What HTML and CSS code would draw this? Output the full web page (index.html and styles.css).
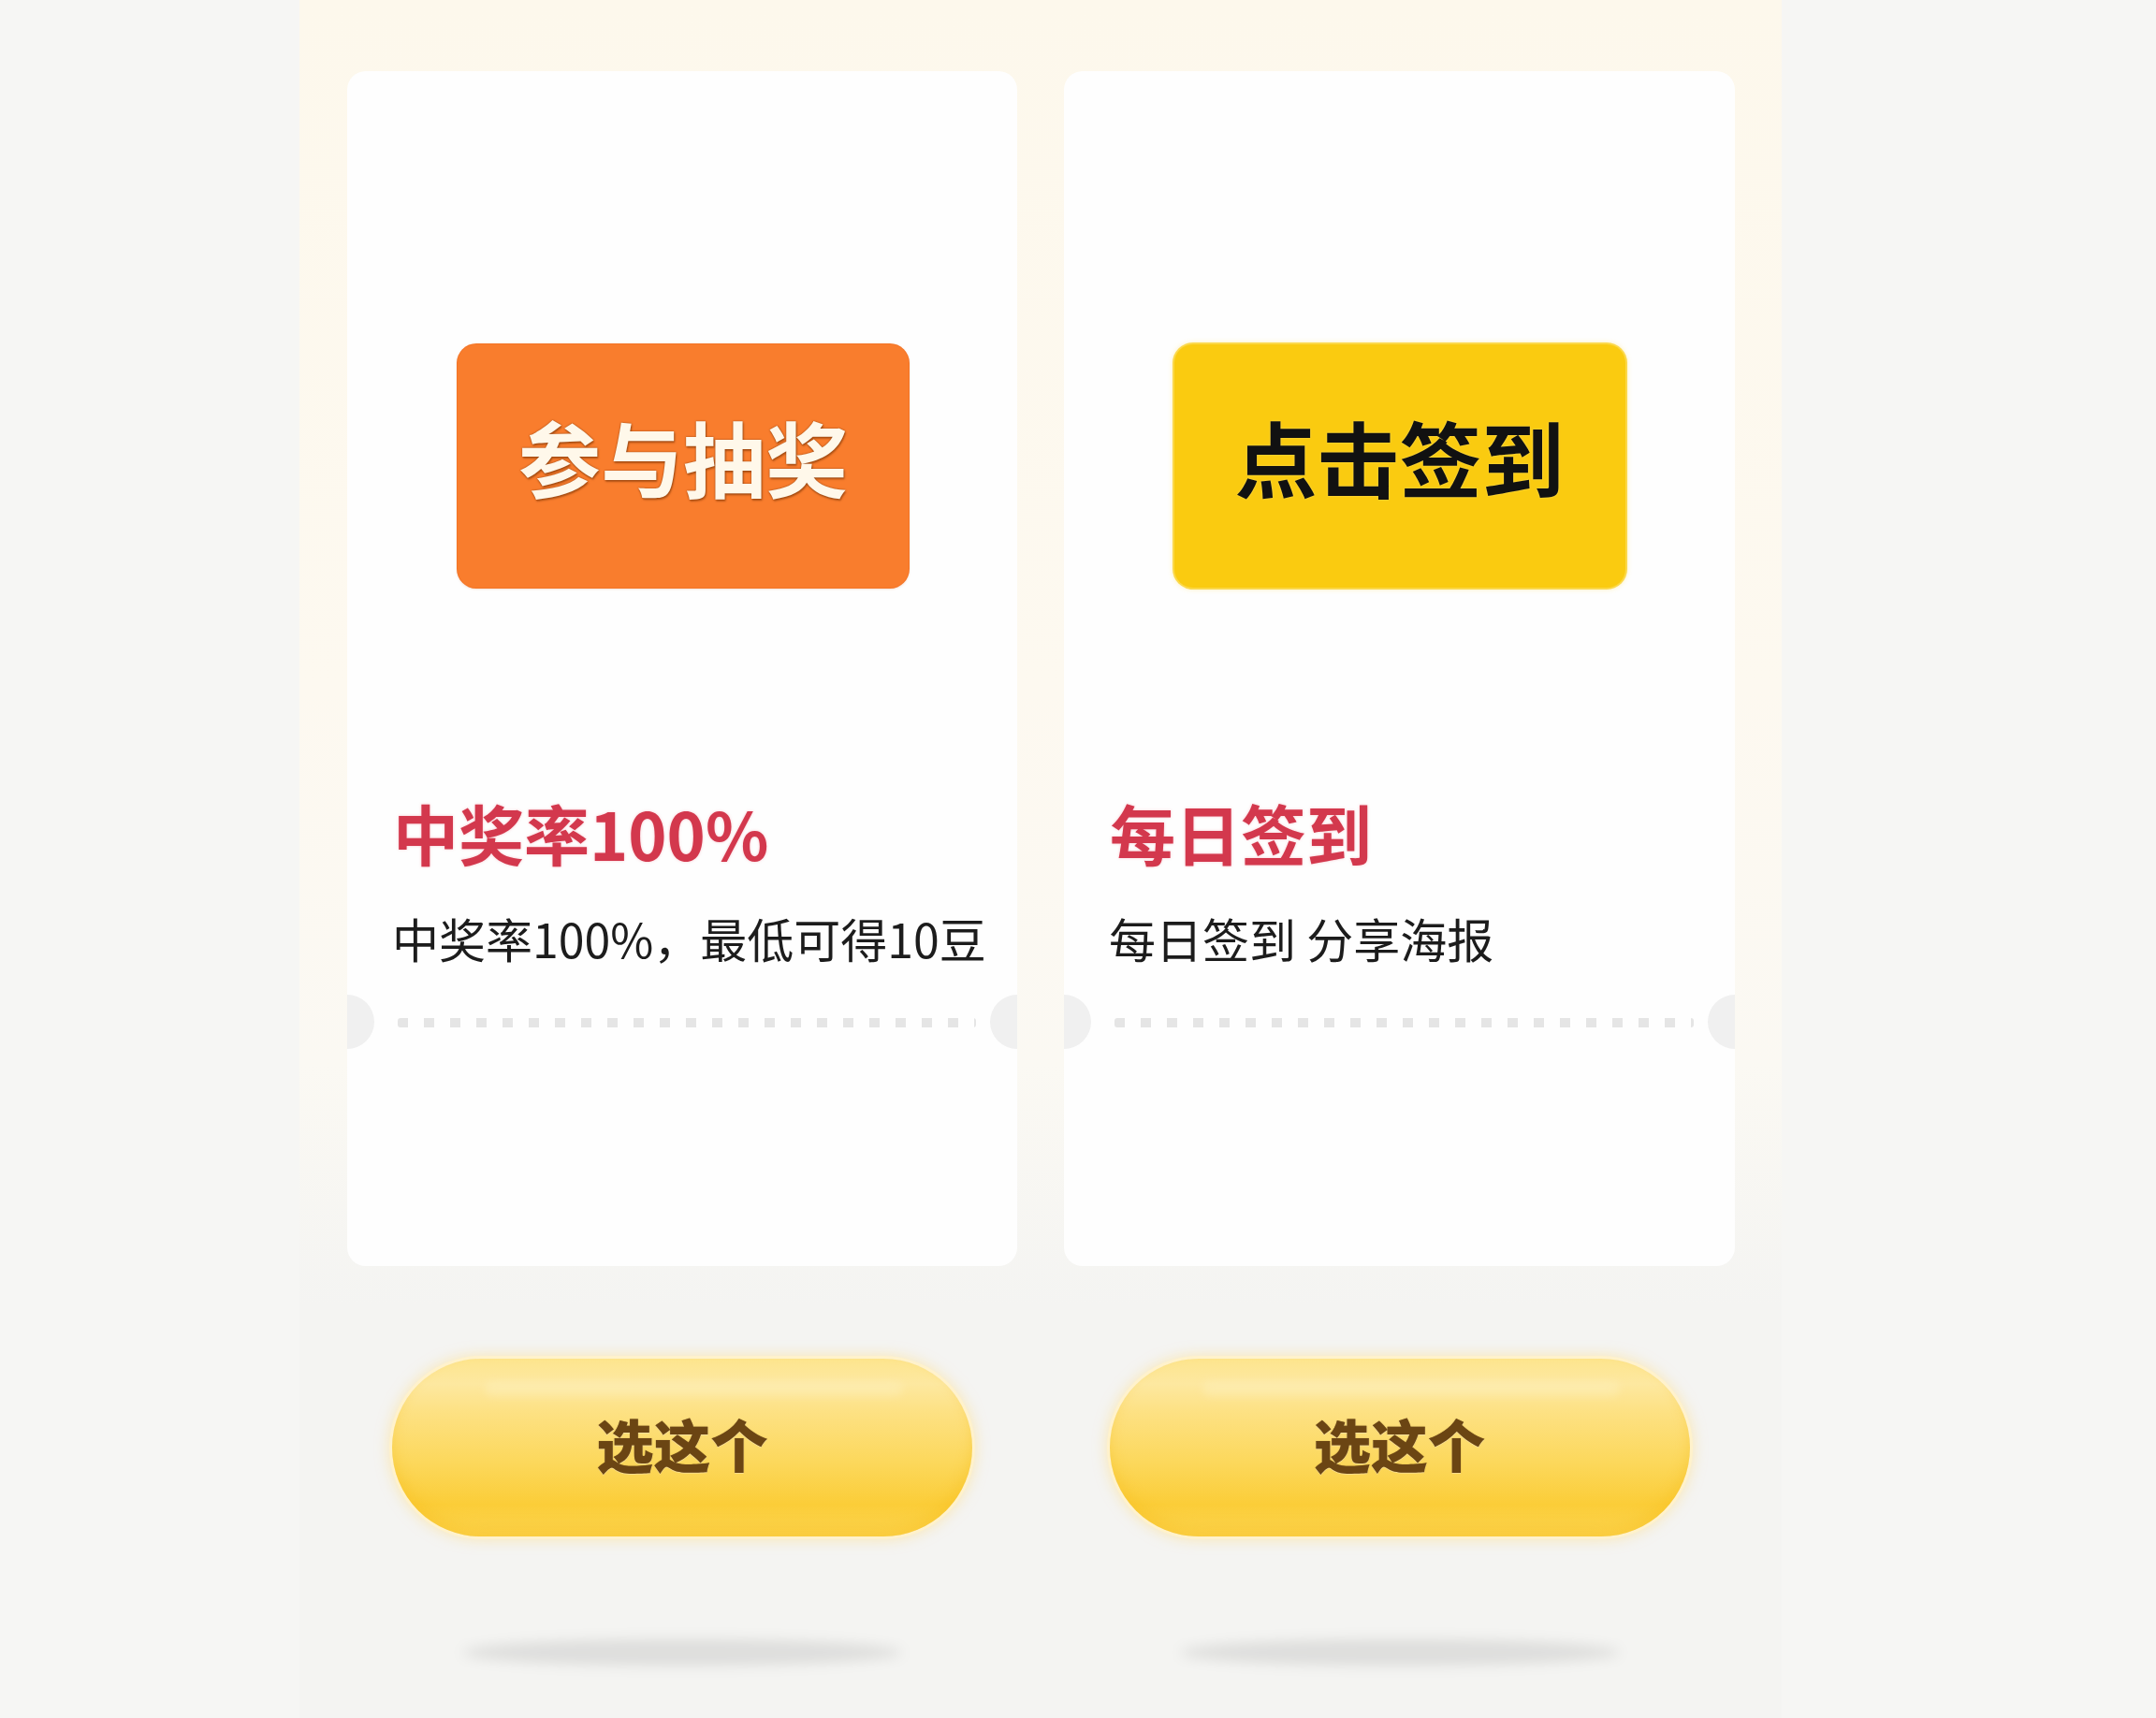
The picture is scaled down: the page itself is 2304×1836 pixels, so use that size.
FILE: index.html
```html
<!DOCTYPE html>
<html lang="zh-CN">
<head>
<meta charset="utf-8">
<title>选择任务</title>
<link rel="stylesheet" href="styles.css">
</head>
<body>
<div class="page">
  <div class="panel">
    <div class="column">
      <div class="card">
        <div class="badge badge-orange"><span>参与抽奖</span></div>
        <div class="title">中奖率100%</div>
        <div class="desc">中奖率100%，最低可得10豆</div>
        <div class="divider"></div>
        <span class="notch notch-left"></span>
        <span class="notch notch-right"></span>
      </div>
      <div class="pill"><span>选这个</span></div>
      <div class="floor-shadow"></div>
    </div>
    <div class="column">
      <div class="card">
        <div class="badge badge-yellow"><span>点击签到</span></div>
        <div class="title">每日签到</div>
        <div class="desc">每日签到 分享海报</div>
        <div class="divider"></div>
        <span class="notch notch-left"></span>
        <span class="notch notch-right"></span>
      </div>
      <div class="pill"><span>选这个</span></div>
      <div class="floor-shadow"></div>
    </div>
  </div>
</div>
</body>
</html>
```

FILE: styles.css
```css
* { box-sizing: border-box; }

html, body {
  margin: 0;
  padding: 0;
  background: #f6f6f4;
}

body {
  font-family: "Noto Sans CJK SC", "Noto Sans", sans-serif;
}

.page {
  width: 2304px;
  height: 1836px;
  overflow: hidden;
  padding-left: 320px;
  background: #f6f6f4;
}

.panel {
  width: 1584px;
  height: 1836px;
  padding: 76px 0 0 51px;
  display: grid;
  grid-template-columns: 716px 717px;
  column-gap: 50px;
  align-items: start;
  background: linear-gradient(180deg, #fdf8ec 0%, #fdf9f0 40%, #fbf9f3 62%, #f4f4f2 76%, #f4f4f2 100%);
}

.column {
  display: flex;
  flex-direction: column;
  align-items: center;
}

.card {
  position: relative;
  width: 100%;
  height: 1277px;
  background: #fefefe;
  border-radius: 20px;
  overflow: hidden;
  display: flex;
  flex-direction: column;
}

.badge {
  align-self: center;
  margin-top: 292px;
  width: 482px;
  height: 260px;
  border-radius: 20px;
  display: flex;
  align-items: center;
  justify-content: center;
  font-size: 88px;
  font-weight: 700;
  line-height: 1;
}

.badge span {
  position: relative;
  top: -11px;
}

.badge-orange {
  margin-left: 2px;
  background: #f97d2d;
  box-shadow: 0 0 0 1px #f37426, 0 1px 3px rgba(200, 90, 20, 0.35);
  color: #fff8ea;
  text-shadow: 0 0 2px rgba(110, 45, 5, 0.8), 1px 2px 2px rgba(120, 50, 0, 0.5);
}

.badge-yellow {
  margin-left: 0;
  background: #facb10;
  box-shadow: 0 0 0 2px #fbd84a, 0 0 6px rgba(255, 215, 60, 0.7);
  color: #111111;
  text-shadow: 0 0 2px rgba(255, 235, 140, 0.7);
}

.title {
  margin: 227px 0 0 49px;
  font-size: 70px;
  font-weight: 700;
  line-height: 1;
  color: #d3384d;
  text-shadow: 0 0 3px rgba(235, 90, 110, 0.35);
}

.desc {
  margin: 52px 0 0 48px;
  font-size: 50px;
  font-weight: 400;
  line-height: 1;
  color: #1c1c1c;
}

.divider {
  margin: 61px 44px 0 54px;
  height: 10px;
  background: repeating-linear-gradient(90deg, #e5e5e5 0 11px, transparent 11px 28px);
  border-radius: 3px;
}

.notch {
  position: absolute;
  top: 987px;
  width: 58px;
  height: 58px;
  border-radius: 50%;
  background: #f0f0f0;
}

.notch-left { left: -29px; }
.notch-right { right: -29px; }

.pill {
  position: relative;
  margin-top: 99px;
  width: 620px;
  height: 190px;
  border-radius: 95px;
  display: flex;
  align-items: center;
  justify-content: center;
  background: linear-gradient(180deg, #fde58e 0%, #fde8a0 14%, #fde183 30%, #fcd85c 58%, #fbcd38 82%, #fcd552 100%);
  box-shadow: 0 0 0 3px #fff2cc, 0 0 14px 4px rgba(255, 222, 130, 0.5), inset 0 -10px 14px rgba(248, 190, 30, 0.4);
}

.pill::before {
  content: "";
  position: absolute;
  left: 16%;
  right: 12%;
  top: 24px;
  height: 16px;
  border-radius: 8px;
  background: rgba(255, 244, 200, 0.35);
  filter: blur(5px);
}

.pill span {
  position: relative;
  top: -5px;
  font-size: 61px;
  font-weight: 900;
  line-height: 1;
  color: #6b4513;
  text-shadow: 0 1px 0 rgba(255, 240, 200, 0.5), 0 0 1px rgba(80, 45, 5, 0.6);
}

.floor-shadow {
  margin-top: 110px;
  width: 470px;
  height: 28px;
  border-radius: 50%;
  background: rgba(0, 0, 0, 0.09);
  filter: blur(7px);
}
```
